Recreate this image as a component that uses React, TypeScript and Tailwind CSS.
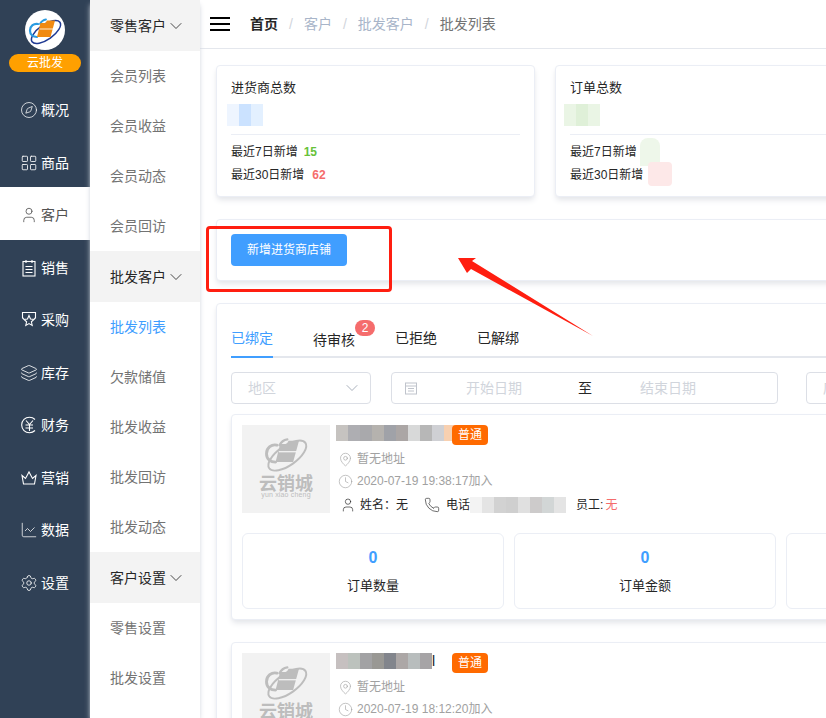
import React from "react";
import { ChevronDown, Clock, Compass, LayoutGrid, Layers, MapPin, Phone, Settings, ChartLine, User } from "lucide-react";

const OrderIcon = () => (
    <svg width="16" height="18" viewBox="0 0 16 18" fill="none" stroke="currentColor" strokeWidth="1.1">
        <rect x="2" y="2.5" width="12" height="14.5" />
        <path d="M5 1v3M11 1v3M4.5 7.5h7M4.5 10.5h7M4.5 13.5h7" />
    </svg>
);

const BagIcon = () => (
    <svg width="16" height="18" viewBox="0 0 16 18" fill="none" stroke="currentColor" strokeWidth="1.1">
        <path d="M3 7.500 1.500 7V1.500h13V7L13 7.500" />
        <path d="m8 4.500 1.500 3.500 3.500.4-2.600 2.400.8 3.700L8 12.600l-3.200 1.900.8-3.700L3 8.400l3.500-.4Z" />
    </svg>
);

const YenIcon = () => (
    <svg width="18" height="18" viewBox="0 0 18 18" fill="none" stroke="currentColor" strokeWidth="1.1">
        <path d="M15 3.500A7.800 7.800 0 1 0 15 14.500" />
        <path d="m6 4.500 3.500 4 3.500-4M5.500 9h7.500M5.500 12h7.500M9.500 9v6" />
    </svg>
);

const CrownIcon = () => (
    <svg width="18" height="16" viewBox="0 0 18 16" fill="none" stroke="currentColor" strokeWidth="1.1">
        <path d="M2 5.500 5.500 8.500 9 2l3.500 6.500L16 5.500 14.500 14h-11Z" />
    </svg>
);

const menu = [
    { name: "概况", icon: <Compass size={18} strokeWidth={1} /> },
    { name: "商品", icon: <LayoutGrid size={18} strokeWidth={1.1} /> },
    { name: "客户", icon: <User size={18} strokeWidth={1.1} />, active: true },
    { name: "销售", icon: <OrderIcon /> },
    { name: "采购", icon: <BagIcon /> },
    { name: "库存", icon: <Layers size={18} strokeWidth={1.1} /> },
    { name: "财务", icon: <YenIcon /> },
    { name: "营销", icon: <CrownIcon /> },
    { name: "数据", icon: <ChartLine size={18} strokeWidth={1} /> },
    { name: "设置", icon: <Settings size={18} strokeWidth={1.1} /> },
];

const subMenu = [
    { title: "零售客户", items: ["会员列表", "会员收益", "会员动态", "会员回访"] },
    { title: "批发客户", items: ["批发列表", "欠款储值", "批发收益", "批发回访", "批发动态"] },
    { title: "客户设置", items: ["零售设置", "批发设置"] },
];

const Logo = ({ cloud, folder, orbit }: { cloud: string; folder: string; orbit: string }) => (
    <svg viewBox="0 0 40 40" className="h-full w-full" fill="none">
        <ellipse cx="21" cy="22" rx="17" ry="7.500" transform="rotate(-35 21 22)" stroke={orbit} strokeWidth="1.500" />
        <path d="M13 14c-4-1-8 2-8 6.500 0 4 3 6.500 7 6.500" stroke={cloud} strokeWidth="2.200" strokeLinecap="round" />
        <path d="M15 14c1-2 3-4 6-4.500" stroke={cloud} strokeWidth="1.800" strokeLinecap="round" />
        <path d="M12 27 15.500 13h5l1.500-2.500h8L25.500 27Z" fill={folder} />
        <path d="M14.500 19h13.500" stroke="#fff" strokeWidth="1" opacity="0.8" />
    </svg>
);

const Mosaic = ({ colors, cellClass }: { colors: string[]; cellClass: string }) => (
    <div className="flex shrink-0">
        {colors.map((color, i) => (
            <div key={i} className={cellClass} style={{ backgroundColor: color }} />
        ))}
    </div>
);

const Summary = ({ title, children }: { title: string; children: React.ReactNode }) => (
    <div className="relative rounded border border-[#ebeef5] bg-white px-3.5 pt-3.5 pb-2.25 shadow-md shadow-gray-200">
        <div className="h-4 text-[13px] leading-4 text-neutral-800">{title}</div>
        {children}
    </div>
);

const stats = ["订单数量", "订单金额", "退款金额", "欠款金额"];

const Customer = ({ names, time, tail }: { names: string[]; time: string; tail?: boolean }) => (
    <div className="rounded border border-[#ebeef5] bg-white p-2.5 shadow-md shadow-gray-200">
        <div className="flex h-22">
            <div className="flex w-22 shrink-0 flex-col items-center bg-[#f2f2f2] pt-0.5 text-[#bdbdbd]">
                <div className="h-13 w-13 shrink-0">
                    <Logo cloud="#bdbdbd" folder="#bdbdbd" orbit="#bdbdbd" />
                </div>
                <div className="-mt-0.5 text-lg leading-3.5 font-bold">云销城</div>
                <div className="text-[7px] leading-2 tracking-wide">yun xiao cheng</div>
            </div>
            <div className="ml-1.5 flex-1">
                <div className="flex h-5 items-start">
                    <div className="flex w-29 items-center text-sm text-gray-900">
                        <Mosaic colors={names} cellClass="h-4 w-3" />
                        {tail && <span className="leading-4">l</span>}
                    </div>
                    <span className="rounded-sm bg-[#ff6a00] px-1.5 text-xs leading-5 text-white">普通</span>
                </div>
                <div className="mt-1 flex h-5 items-center pl-0.5 text-xs text-neutral-400">
                    <MapPin size={15} strokeWidth={1} />
                    <span className="ml-1">暂无地址</span>
                </div>
                <div className="mt-0.5 flex h-5 items-center pl-0.5 text-xs text-neutral-400">
                    <Clock size={15} strokeWidth={1} />
                    <span className="ml-1">{time}加入</span>
                </div>
                <div className="mt-1 flex h-5 items-center pl-1 text-xs text-neutral-800">
                    <User size={16} strokeWidth={1} />
                    <span className="ml-1">姓名：无</span>
                    <Phone size={16} strokeWidth={1} className="ml-4" />
                    <span className="ml-1.5">电话</span>
                    <Mosaic colors={["#f3f3f3", "#e4e4e4", "#d2d2d2", "#cfcfcf", "#e0e0e0", "#cdcbcb", "#d2d6d6", "#e4e4e4"]} cellClass="h-4 w-3" />
                    <span className="ml-2.5">员工:</span>
                    <span className="ml-0.5 text-[#f56c6c]">无</span>
                </div>
            </div>
        </div>
        <div className="mt-5 flex gap-2.5">
            {stats.map((stat) => (
                <div key={stat} className="flex h-19 w-65.5 shrink-0 flex-col items-center rounded-md border border-[#ebeef5] pt-3.5">
                    <div className="text-base leading-5 font-bold text-[#409eff]">0</div>
                    <div className="mt-2 text-[13px] leading-5 text-neutral-800">{stat}</div>
                </div>
            ))}
        </div>
    </div>
);

const App = () => {
    return (
        <div className="relative flex h-screen w-screen overflow-hidden bg-white font-['Liberation_Sans','Noto_Sans_CJK_SC',sans-serif]">
            <aside className="flex w-22.5 shrink-0 flex-col bg-[#304156] text-white">
                <div className="flex h-20.5 flex-col items-center pt-2.5">
                    <div className="h-10 w-10 rounded-full bg-white">
                        <Logo cloud="#2b9be0" folder="#f08a12" orbit="#1f3a93" />
                    </div>
                    <div className="mt-1 h-4.5 w-18 rounded-full bg-[#ffa000] text-center text-xs leading-4.5">云批发</div>
                </div>
                <nav className="flex h-[525px] flex-col">
                    {menu.map((item) => (
                        <div
                            key={item.name}
                            className={`flex flex-1 items-center gap-0.75 pt-1 pl-5 text-sm ${item.active ? "bg-white text-neutral-600" : ""}`}
                        >
                            <span className="flex w-4.5 justify-center">{item.icon}</span>
                            <span>{item.name}</span>
                        </div>
                    ))}
                </nav>
            </aside>

            <div className="z-10 w-27.5 shrink-0 bg-white shadow-md shadow-gray-300">
                {subMenu.map((group) => (
                    <div key={group.title}>
                        <div className="flex h-12.75 items-center bg-[#f3f3f3] pl-5 text-sm text-neutral-800">
                            {group.title}
                            <ChevronDown size={20} strokeWidth={1} />
                        </div>
                        {group.items.map((item) => (
                            <div key={item} className={`flex h-12.5 items-center pl-5 text-sm ${item === "批发列表" ? "text-[#409eff]" : "text-neutral-500"}`}>
                                {item}
                            </div>
                        ))}
                    </div>
                ))}
            </div>

            <main className="min-w-0 flex-1">
                <header className="flex h-12.25 items-center border-b border-[#e4e7ed] pl-2.5 text-sm">
                    <div className="flex w-5 flex-col gap-1">
                        <span className="h-0.5 bg-black" />
                        <span className="h-0.5 bg-black" />
                        <span className="h-0.5 bg-black" />
                    </div>
                    <span className="ml-5 font-bold text-neutral-800">首页</span>
                    <span className="mx-2.75 text-gray-300">/</span>
                    <span className="text-[#a8b5c9]">客户</span>
                    <span className="mx-2.75 text-gray-300">/</span>
                    <span className="text-[#a8b5c9]">批发客户</span>
                    <span className="mx-2.75 text-gray-300">/</span>
                    <span className="text-neutral-500">批发列表</span>
                </header>

                <div className="flex w-[1352px] flex-col gap-5.5 p-4 pr-0">
                    <div className="grid grid-cols-4 gap-5">
                        <Summary title="进货商总数">
                            <div className="-ml-1 mt-2">
                                <Mosaic colors={["#eef5ff", "#cbe2ff", "#e3f0ff"]} cellClass="h-5.5 w-3" />
                            </div>
                            <div className="mt-2 border-t border-[#ebeef5] pt-1.5 text-xs leading-5.75 text-neutral-800">
                                <div>
                                    最近7日新增<span className="ml-1.5 font-bold text-[#67c23a]">15</span>
                                </div>
                                <div>
                                    最近30日新增<span className="ml-2 font-bold text-[#f56c6c]">62</span>
                                </div>
                            </div>
                        </Summary>
                        <Summary title="订单总数">
                            <div className="-ml-1.5 mt-2">
                                <Mosaic colors={["#eaf5e5", "#dff0d8", "#eaf5e5"]} cellClass="h-5.5 w-3" />
                            </div>
                            <div className="mt-2 border-t border-[#ebeef5] pt-1.5 text-xs leading-5.75 text-neutral-800">
                                <div>最近7日新增</div>
                                <div>最近30日新增</div>
                            </div>
                            <div className="absolute top-18 left-21 h-7 w-5 rounded-t-lg bg-[#eef7ea]" />
                            <div className="absolute top-24 left-23 h-6 w-6 rounded-sm bg-[#fde8e8]" />
                        </Summary>
                        <Summary title="销售总额">
                            <div className="mt-2 h-5.5" />
                        </Summary>
                    </div>

                    <div className="rounded border border-[#ebeef5] bg-white p-3.5 shadow-md shadow-gray-200">
                        <button className="h-8 w-29 rounded-sm bg-[#409eff] text-xs text-white">新增进货商店铺</button>
                    </div>

                    <div className="rounded border border-[#ebeef5] bg-white p-3.5 shadow-md shadow-gray-200">
                        <div className="flex h-10 gap-10 border-b-2 border-[#e4e7ed] text-sm leading-10 text-neutral-800">
                            <div className="h-10 border-b-2 border-[#409eff] text-[#409eff]">已绑定</div>
                            <div className="relative pt-0.5">
                                待审核
                                <span className="absolute top-0.5 -right-5 h-4 w-5 rounded-full bg-[#f56c6c] text-center text-xs leading-4 text-white">2</span>
                            </div>
                            <div>已拒绝</div>
                            <div>已解绑</div>
                        </div>

                        <div className="mt-3.5 flex text-sm text-gray-300">
                            <div className="flex h-8 w-35 items-center justify-between rounded border border-[#dcdfe6] pr-2 pl-4">
                                地区
                                <ChevronDown size={20} strokeWidth={1} className="text-gray-400" />
                            </div>
                            <div className="ml-5 flex h-8 w-[387px] items-center rounded border border-[#dcdfe6] pl-3">
                                <svg width="14" height="14" viewBox="0 0 14 14" fill="none" stroke="#c0c4cc" strokeWidth="1">
                                    <rect x="1.500" y="2" width="11" height="11" />
                                    <path d="M1.500 5h11M4 7.500h6M4 10h6" />
                                </svg>
                                <span className="ml-12">开始日期</span>
                                <span className="ml-14 text-neutral-800">至</span>
                                <span className="ml-12">结束日期</span>
                            </div>
                            <div className="ml-7 flex h-8 w-35 items-center rounded border border-[#dcdfe6] px-4">店铺类型</div>
                        </div>

                        <div className="mt-2.5 flex flex-col gap-5.5">
                            <Customer
                                names={["#c6c3c0", "#aeaeb2", "#a9a9ac", "#b5b2ae", "#a0a2a8", "#aba6a5", "#d8d9d9", "#b7b7b7", "#cfd0d4", "#f8d0b0"]}
                                time="2020-07-19 19:38:17"
                            />
                            <Customer
                                names={["#c6c0c0", "#bcc2bd", "#a2a2a4", "#999894", "#82858c", "#aca7a6", "#b8bdbd", "#a6a4a6"]}
                                time="2020-07-19 18:12:20"
                                tail
                            />
                        </div>
                    </div>
                </div>
            </main>

            <div className="absolute top-56.5 left-51.5 z-20 h-16.5 w-46.5 rounded border-3 border-[#ff1e10]" />
            <svg className="absolute top-64 left-114 z-20" width="140" height="82" viewBox="0 0 140 82" fill="#ff1e10">
                <polygon points="2,2 20,2 16,5 137,80 15,13 11,17" />
            </svg>
        </div>
    );
};

export default App;
